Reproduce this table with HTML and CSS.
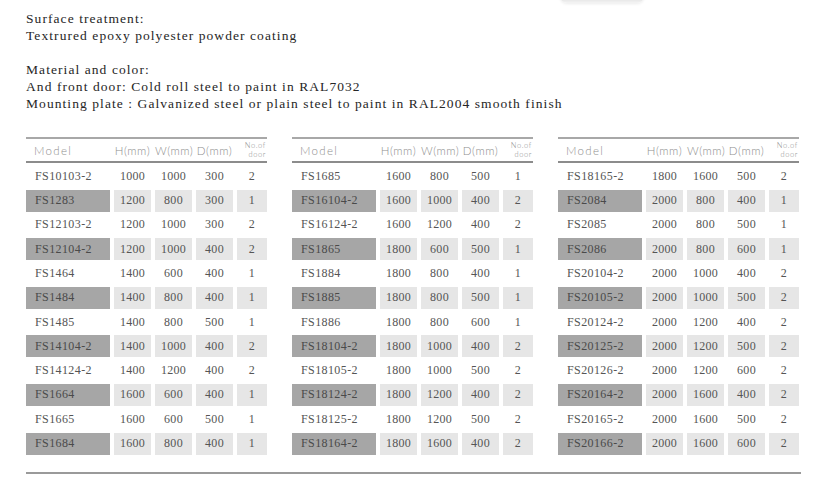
FILE: index.html
```html
<!DOCTYPE html>
<html>
<head>
<meta charset="utf-8">
<link rel="stylesheet" href="styles.css">
</head>
<body>
<div class="page">
  <div class="shade"></div>
  <div class="intro">
    <p>Surface treatment:<br>Textrured epoxy polyester powder coating</p>
    <p>Material and color:<br>And front door: Cold roll steel to paint in RAL7032<br>Mounting plate : Galvanized steel or plain steel to paint in RAL2004 smooth finish</p>
  </div>
  <div class="tables">
    <div class="tbl">
      <div class="head"><span class="h-model">Model</span><span>H(mm)</span><span>W(mm)</span><span>D(mm)</span><span class="h-door">No.of<br>door</span></div>
      <div class="row"><span class="m">FS10103-2</span><span>1000</span><span>1000</span><span>300</span><span>2</span></div>
      <div class="row alt"><span class="m">FS1283</span><span>1200</span><span>800</span><span>300</span><span>1</span></div>
      <div class="row"><span class="m">FS12103-2</span><span>1200</span><span>1000</span><span>300</span><span>2</span></div>
      <div class="row alt"><span class="m">FS12104-2</span><span>1200</span><span>1000</span><span>400</span><span>2</span></div>
      <div class="row"><span class="m">FS1464</span><span>1400</span><span>600</span><span>400</span><span>1</span></div>
      <div class="row alt"><span class="m">FS1484</span><span>1400</span><span>800</span><span>400</span><span>1</span></div>
      <div class="row"><span class="m">FS1485</span><span>1400</span><span>800</span><span>500</span><span>1</span></div>
      <div class="row alt"><span class="m">FS14104-2</span><span>1400</span><span>1000</span><span>400</span><span>2</span></div>
      <div class="row"><span class="m">FS14124-2</span><span>1400</span><span>1200</span><span>400</span><span>2</span></div>
      <div class="row alt"><span class="m">FS1664</span><span>1600</span><span>600</span><span>400</span><span>1</span></div>
      <div class="row"><span class="m">FS1665</span><span>1600</span><span>600</span><span>500</span><span>1</span></div>
      <div class="row alt"><span class="m">FS1684</span><span>1600</span><span>800</span><span>400</span><span>1</span></div>
    </div>
    <div class="tbl">
      <div class="head"><span class="h-model">Model</span><span>H(mm)</span><span>W(mm)</span><span>D(mm)</span><span class="h-door">No.of<br>door</span></div>
      <div class="row"><span class="m">FS1685</span><span>1600</span><span>800</span><span>500</span><span>1</span></div>
      <div class="row alt"><span class="m">FS16104-2</span><span>1600</span><span>1000</span><span>400</span><span>2</span></div>
      <div class="row"><span class="m">FS16124-2</span><span>1600</span><span>1200</span><span>400</span><span>2</span></div>
      <div class="row alt"><span class="m">FS1865</span><span>1800</span><span>600</span><span>500</span><span>1</span></div>
      <div class="row"><span class="m">FS1884</span><span>1800</span><span>800</span><span>400</span><span>1</span></div>
      <div class="row alt"><span class="m">FS1885</span><span>1800</span><span>800</span><span>500</span><span>1</span></div>
      <div class="row"><span class="m">FS1886</span><span>1800</span><span>800</span><span>600</span><span>1</span></div>
      <div class="row alt"><span class="m">FS18104-2</span><span>1800</span><span>1000</span><span>400</span><span>2</span></div>
      <div class="row"><span class="m">FS18105-2</span><span>1800</span><span>1000</span><span>500</span><span>2</span></div>
      <div class="row alt"><span class="m">FS18124-2</span><span>1800</span><span>1200</span><span>400</span><span>2</span></div>
      <div class="row"><span class="m">FS18125-2</span><span>1800</span><span>1200</span><span>500</span><span>2</span></div>
      <div class="row alt"><span class="m">FS18164-2</span><span>1800</span><span>1600</span><span>400</span><span>2</span></div>
    </div>
    <div class="tbl">
      <div class="head"><span class="h-model">Model</span><span>H(mm)</span><span>W(mm)</span><span>D(mm)</span><span class="h-door">No.of<br>door</span></div>
      <div class="row"><span class="m">FS18165-2</span><span>1800</span><span>1600</span><span>500</span><span>2</span></div>
      <div class="row alt"><span class="m">FS2084</span><span>2000</span><span>800</span><span>400</span><span>1</span></div>
      <div class="row"><span class="m">FS2085</span><span>2000</span><span>800</span><span>500</span><span>1</span></div>
      <div class="row alt"><span class="m">FS2086</span><span>2000</span><span>800</span><span>600</span><span>1</span></div>
      <div class="row"><span class="m">FS20104-2</span><span>2000</span><span>1000</span><span>400</span><span>2</span></div>
      <div class="row alt"><span class="m">FS20105-2</span><span>2000</span><span>1000</span><span>500</span><span>2</span></div>
      <div class="row"><span class="m">FS20124-2</span><span>2000</span><span>1200</span><span>400</span><span>2</span></div>
      <div class="row alt"><span class="m">FS20125-2</span><span>2000</span><span>1200</span><span>500</span><span>2</span></div>
      <div class="row"><span class="m">FS20126-2</span><span>2000</span><span>1200</span><span>600</span><span>2</span></div>
      <div class="row alt"><span class="m">FS20164-2</span><span>2000</span><span>1600</span><span>400</span><span>2</span></div>
      <div class="row"><span class="m">FS20165-2</span><span>2000</span><span>1600</span><span>500</span><span>2</span></div>
      <div class="row alt"><span class="m">FS20166-2</span><span>2000</span><span>1600</span><span>600</span><span>2</span></div>
    </div>
  </div>
  <div class="foot-line"></div>
</div>
</body>
</html>
```

FILE: styles.css
```css
html, body {
  margin: 0;
  padding: 0;
  background: #fff;
}
.page {
  position: relative;
  width: 818px;
  height: 479px;
  padding: 10px 0 0 26px;
  box-sizing: border-box;
  overflow: hidden;
}
.shade {
  position: absolute;
  left: 560px;
  top: -4px;
  width: 84px;
  height: 7px;
  border-radius: 0 0 40px 40px;
  background: linear-gradient(to bottom, #d8d8d8, #f4f4f4);
  box-shadow: 0 1px 3px rgba(0,0,0,0.08);
}
.intro {
  font-family: "Liberation Serif", "Times New Roman", serif;
  font-size: 13.5px;
  line-height: 17px;
  letter-spacing: 1.07px;
  color: #262626;
}
.intro p {
  margin: 0;
}
.intro p + p {
  margin-top: 17px;
}
.tables {
  display: flex;
  gap: 25px;
  margin-top: 25px;
}
.tbl {
  width: 241px;
}
.head, .row {
  display: grid;
  grid-template-columns: 84px 37px 37px 37px 30px;
  column-gap: 4px;
}
.head {
  border-top: 2px solid #a8a8a8;
  border-bottom: 2px solid #8c8c8c;
  height: 22px;
  align-items: center;
  font-family: Lato, "Open Sans", sans-serif;
  font-weight: 300;
  font-size: 11.5px;
  color: #8e8e8e;
  letter-spacing: 0.5px;
}
.head span {
  text-align: center;
  white-space: nowrap;
}
.head .h-model {
  text-align: left;
  padding-left: 8px;
  letter-spacing: 1.3px;
  font-size: 11.5px;
}
.head .h-door {
  font-size: 7.5px;
  line-height: 9px;
  text-align: right;
  letter-spacing: 0.6px;
  padding-right: 1px;
}
.row {
  height: 22px;
  margin-top: 2.3px;
  align-items: stretch;
  font-family: "Liberation Serif", "Times New Roman", serif;
  font-size: 12px;
  letter-spacing: 0.3px;
  color: #555;
}
.row span {
  display: flex;
  align-items: center;
  justify-content: center;
}
.row .m {
  justify-content: flex-start;
  padding-left: 9px;
  letter-spacing: 0.4px;
}
.row.alt span {
  background: #e6e6e6;
}
.row.alt .m {
  background: #a6a6a6;
  color: #4a4a4a;
}
.foot-line {
  width: 775px;
  height: 2px;
  background: #9a9a9a;
  margin-top: 17px;
}
```
